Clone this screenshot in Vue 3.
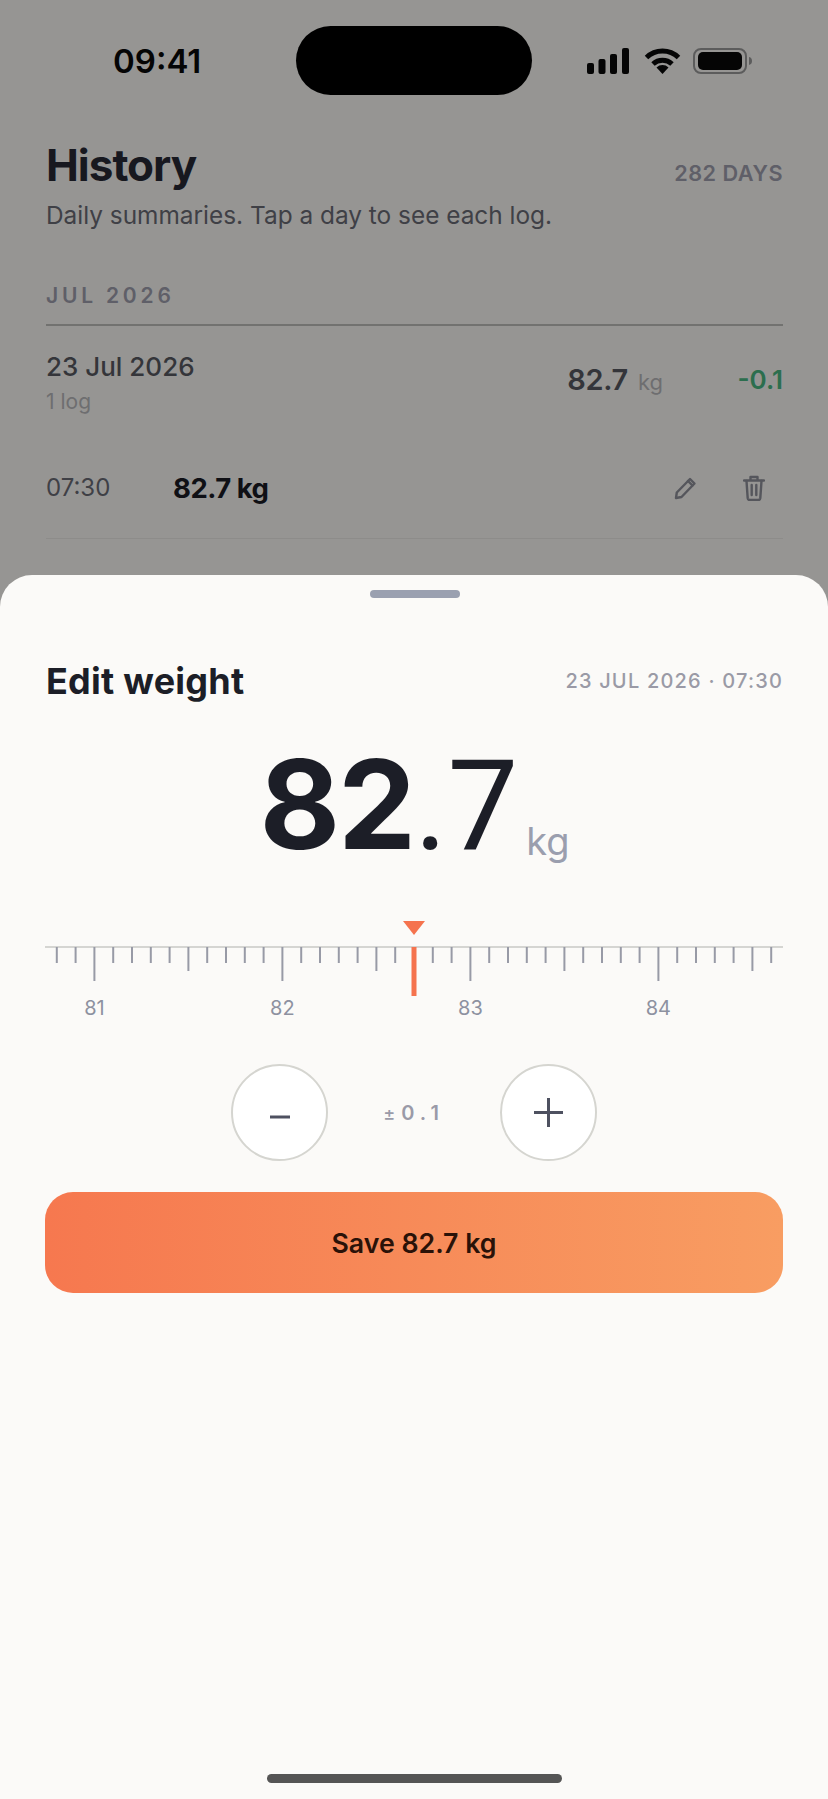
<template>
  <div class="screen">
    <!-- history page behind the sheet -->
    <div class="page">
      <div class="status">
        <span class="time">09:41</span>
        <div class="island"></div>
        <div class="status-icons">
          <svg class="signal" width="42" height="26" viewBox="0 0 42 26">
            <rect x="0" y="15" width="7" height="11" rx="2" />
            <rect x="11.500" y="11" width="7" height="15" rx="2" />
            <rect x="23" y="6" width="7" height="20" rx="2" />
            <rect x="35" y="0" width="7" height="26" rx="2" />
          </svg>
          <svg class="wifi" width="37" height="26" viewBox="0 0 37 26">
            <path d="M2.500 9.500a23 23 0 0 1 32 0" />
            <path d="M9 16a14 14 0 0 1 19 0" />
            <path d="M18.500 26l-6-6.600a8.600 8.600 0 0 1 12 0z" class="wifi-dot" />
          </svg>
          <svg class="battery" width="60" height="26" viewBox="0 0 60 26">
            <rect x="1" y="1" width="52" height="24" rx="7" class="battery-shell" />
            <rect x="5" y="4" width="44" height="18" rx="5" />
            <path d="M56 9c2.400.6 3 2.200 3 4s-.6 3.400-3 4z" class="battery-nub" />
          </svg>
        </div>
      </div>

      <div class="head">
        <div>
          <h1>History</h1>
          <p class="sub">Daily summaries. Tap a day to see each log.</p>
        </div>
        <span class="days">282 DAYS</span>
      </div>

      <div class="month">JUL 2026</div>

      <div class="day-row">
        <div class="day-left">
          <div class="day-date">23 Jul 2026</div>
          <div class="day-count">1 log</div>
        </div>
        <div class="day-value">82.7 <small>kg</small></div>
        <div class="day-delta">-0.1</div>
      </div>

      <div class="log-row">
        <span class="log-time">07:30</span>
        <span class="log-value">82.7 kg</span>
        <svg class="log-icon pencil" width="24" height="24" viewBox="0 0 24 24">
          <path d="M3 22l.8-5.500L17 3l4.500 4.500L8.500 21z" />
          <path d="M15 5l4.500 4.500" />
        </svg>
        <svg class="log-icon trash" width="22" height="26" viewBox="0 0 22 26">
          <path d="M1 5.500h20M7.500 5V2h7v3" />
          <path d="M3.500 6l1.200 17.200c.1 1 .8 1.800 2 1.800h8.600c1.200 0 1.900-.8 2-1.800L18.500 6" />
          <path d="M8.700 10v10M13.300 10v10" />
        </svg>
      </div>
    </div>

    <!-- edit sheet -->
    <div class="sheet">
      <div class="handle"></div>
      <div class="sheet-head">
        <h2>Edit weight</h2>
        <span class="stamp">23 JUL 2026 · 07:30</span>
      </div>

      <div class="reading">
        <span class="whole">82</span><span class="frac">.7</span><span class="unit">kg</span>
      </div>

      <svg class="ruler" width="738" height="106" viewBox="45 918 738 106">
        <line x1="45" y1="947" x2="783" y2="947" class="ruler-base" />
        <line
          v-for="t in ticks"
          :key="t.x"
          :x1="t.x"
          :x2="t.x"
          y1="947"
          :y2="947 + t.len"
          class="tick"
        />
        <text v-for="l in labels" :key="l.text" :x="l.x" y="1015" class="ruler-label">{{ l.text }}</text>
        <rect x="411.500" y="947" width="5" height="49" class="needle" />
        <path d="M403 921h22l-11 14z" class="needle" />
      </svg>

      <div class="stepper">
        <button class="round" aria-label="Decrease">
          <svg width="30" height="30" viewBox="0 0 30 30"><path d="M5 19h20" /></svg>
        </button>
        <span class="step"><small>±</small>0.1</span>
        <button class="round" aria-label="Increase">
          <svg width="30" height="30" viewBox="0 0 30 30"><path d="M0 14.500h29M14.500 0v29" /></svg>
        </button>
      </div>

      <button class="save">Save 82.7 kg</button>
    </div>

    <div class="home-bar"></div>
  </div>
</template>

<script setup>
const center = 414
const perKg = 188
const current = 82.7

// ruler runs 39 ticks around the current value, one tick per 0.1 kg
const ticks = []
for (let i = -19; i <= 19; i++) {
  if (i === 0) continue
  const tenth = 827 + i
  let len = 16
  if (tenth % 10 === 0) len = 34
  else if (tenth % 5 === 0) len = 24
  ticks.push({ x: center + i * (perKg / 10), len })
}

const labels = [81, 82, 83, 84].map((v) => ({
  text: String(v),
  x: center + (v - current) * perKg
}))
</script>

<style>
html,
body {
  margin: 0;
  background: #fbfaf8;
}
</style>

<style scoped>
.screen {
  position: relative;
  width: 828px;
  height: 1799px;
  overflow: hidden;
  background: #969593;
  font-family: Inter, "Noto Sans", sans-serif;
}

.page {
  padding: 0 45px 0 46px;
}

.status {
  height: 122px;
  position: relative;
  display: flex;
  align-items: center;
  justify-content: space-between;
}

.time {
  margin-left: 67px;
  font-size: 33px;
  font-weight: 600;
  color: #050505;
}

.island {
  position: absolute;
  left: 250px;
  top: 26px;
  width: 236px;
  height: 69px;
  border-radius: 35px;
  background: #000;
}

.status-icons {
  display: flex;
  align-items: center;
  gap: 12px;
  margin-right: 30px;
}

.signal {
  margin-right: 3px;
}

.signal rect,
.battery rect {
  fill: #050505;
}

.wifi path {
  fill: none;
  stroke: #050505;
  stroke-width: 5;
}

.wifi .wifi-dot {
  fill: #050505;
  stroke: none;
}

.battery .battery-shell {
  fill: none;
  stroke: #5c5c5c;
  stroke-width: 2;
}

.battery-nub {
  fill: #5c5c5c;
}

.head {
  display: flex;
  justify-content: space-between;
  margin-top: 18px;
}

h1 {
  margin: 0;
  font-size: 44px;
  line-height: 50px;
  font-weight: 700;
  letter-spacing: -1px;
  color: #17181f;
}

.sub {
  margin: 10px 0 0;
  font-size: 24.400px;
  line-height: 30px;
  color: #3f4046;
}

.days {
  margin-top: 20px;
  font-size: 21.700px;
  line-height: 26px;
  font-weight: 600;
  letter-spacing: 0.5px;
  color: #5f5f68;
}

.month {
  margin-top: 53px;
  padding-bottom: 15px;
  border-bottom: 2px solid #727270;
  font-size: 21px;
  line-height: 26px;
  font-weight: 600;
  letter-spacing: 3.800px;
  color: #5f5f68;
}

.day-row {
  display: flex;
  align-items: center;
  height: 111px;
}

.day-left {
  padding-top: 2px;
}

.day-date {
  font-size: 26px;
  line-height: 32px;
  font-weight: 500;
  color: #34353a;
}

.day-count {
  margin-top: 6px;
  font-size: 21px;
  line-height: 26px;
  color: #6e6e70;
}

.day-value {
  margin-left: auto;
  margin-bottom: 5px;
  font-size: 29px;
  font-weight: 600;
  letter-spacing: -0.3px;
  color: #34353a;
}

.day-value small {
  margin-left: 3px;
  font-size: 22px;
  font-weight: 400;
  letter-spacing: 0;
  color: #6e6e70;
}

.day-delta {
  width: 120px;
  margin-bottom: 5px;
  text-align: right;
  font-size: 26px;
  font-weight: 600;
  color: #2c6e4e;
}

.log-row {
  display: flex;
  align-items: center;
  height: 101px;
  border-bottom: 1px solid #8d8c8a;
}

.log-time {
  width: 127px;
  font-size: 24px;
  color: #3f4046;
}

.log-value {
  font-size: 27.500px;
  font-weight: 700;
  letter-spacing: -0.5px;
  color: #0f1015;
}

.log-icon {
  fill: none;
  stroke: #55565c;
  stroke-width: 2.400;
  stroke-linejoin: round;
  stroke-linecap: round;
}

.pencil {
  margin-left: auto;
}

.trash {
  margin-left: 46px;
  margin-right: 18px;
}

.sheet {
  position: absolute;
  left: 0;
  right: 0;
  top: 575px;
  bottom: 0;
  padding: 0 45px 0 46px;
  border-radius: 32px 32px 0 0;
  background: #fbfaf8;
}

.handle {
  width: 90px;
  height: 8px;
  margin: 15px auto 0;
  border-radius: 4px;
  background: #9aa0b0;
}

.sheet-head {
  display: flex;
  justify-content: space-between;
  align-items: center;
  margin-top: 61px;
}

h2 {
  margin: 0;
  font-size: 36px;
  line-height: 44px;
  font-weight: 700;
  letter-spacing: 0.25px;
  color: #1c1e27;
}

.stamp {
  font-size: 20px;
  font-weight: 500;
  letter-spacing: 1.200px;
  color: #9a9aa6;
}

.reading {
  display: flex;
  align-items: baseline;
  justify-content: center;
  height: 140px;
  margin-top: 31px;
  line-height: 140px;
  color: #1c1e27;
}

.whole {
  font-size: 124px;
  font-weight: 700;
  letter-spacing: -2px;
}

.frac {
  font-family: Roboto, Inter, sans-serif;
  font-size: 126px;
  font-weight: 400;
}

.unit {
  margin-left: 8px;
  font-size: 38px;
  color: #9a9eae;
  transform: translateY(6px);
}

.ruler {
  display: block;
  margin: 44px 0 0 -1px;
}

.ruler-base {
  stroke: #d5d5d2;
  stroke-width: 2;
}

.tick {
  stroke: #989aa6;
  stroke-width: 2;
}

.needle {
  fill: #f5734e;
}

.ruler-label {
  font-size: 20px;
  fill: #8d91a0;
  text-anchor: middle;
}

.stepper {
  display: flex;
  align-items: center;
  justify-content: center;
  margin-top: 40px;
  margin-left: -1px;
}

.round {
  display: flex;
  align-items: center;
  justify-content: center;
  width: 97px;
  height: 97px;
  padding: 0;
  border: 2px solid #d5d5d0;
  border-radius: 50%;
  background: #fff;
}

.round svg {
  fill: none;
  stroke: #4e5160;
  stroke-width: 3;
}

.step {
  width: 172px;
  text-align: center;
  font-size: 20px;
  font-weight: 600;
  letter-spacing: 6px;
  color: #9a9aa8;
}

.step small {
  font-size: 18px;
  font-weight: 500;
}

.save {
  display: block;
  width: 738px;
  height: 101px;
  margin: 31px 0 0 -1px;
  border: 0;
  border-radius: 28px;
  background: linear-gradient(90deg, #f6784f, #f89d62);
  font-family: inherit;
  font-size: 26.700px;
  font-weight: 600;
  color: #2a1208;
}

.home-bar {
  position: absolute;
  left: 267px;
  top: 1774px;
  width: 295px;
  height: 9px;
  border-radius: 5px;
  background: #555;
}
</style>
